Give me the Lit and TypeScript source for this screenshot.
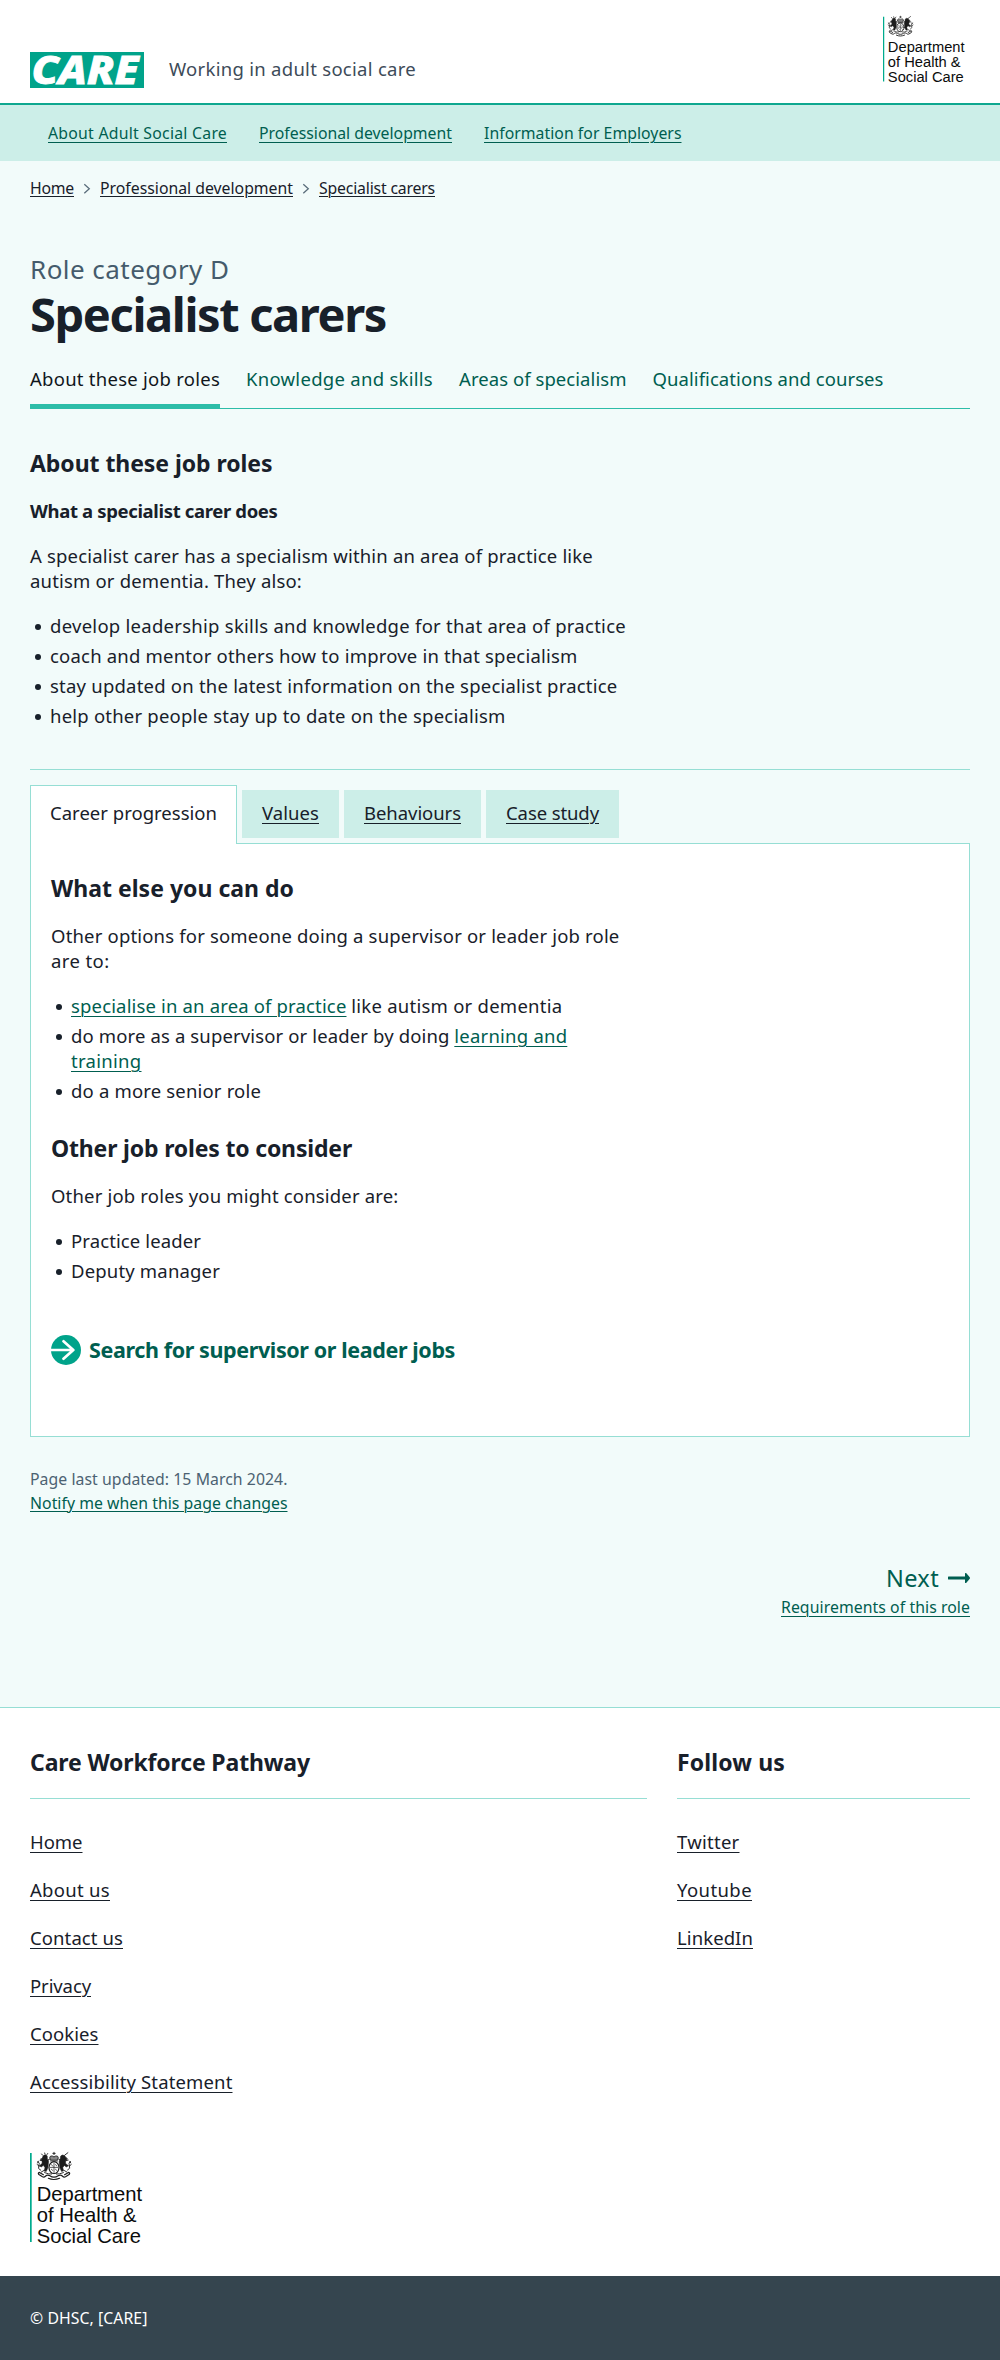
import { LitElement, html, css } from "lit";
import { customElement, property } from "lit/decorators.js";

type Entry = [label: string, width: number];

/* Text set to a fixed measure; tracking is resolved after render. */
const fit = (text: string, width: number) =>
  html`<span class="fit" data-w=${width}>${text}</span>`;
const link = ([text, width]: Entry) =>
  html`<a class="link"><span class="fit" data-w=${width}>${text}</span></a>`;

@customElement("dept-logo")
class DeptLogo extends LitElement {
  @property({ type: Number }) width = 112;

  static styles = css`
    :host { display: block; line-height: 0; }
    svg { display: block; overflow: visible; }
    .name { font: 20.2px "Liberation Sans", Arial, sans-serif; fill: #0b0c0c; }
  `;

  render() {
    return html`
      <svg width=${this.width} height=${(this.width * 92) / 112} viewBox="0 0 112 92">
        <rect x="0" y="1" width="1.7" height="89" fill="#00ab8e"></rect>
        <g stroke="#1c1c1c" fill="none" stroke-linecap="round" stroke-linejoin="round">
          <path d="M24 0.3v2.4M22.8 1.4h2.4" stroke-width="0.9"></path>
          <path d="M20.6 7.6q-2-3 .6-3.6q1.6-.2 2.8 1q1.2-1.2 2.8-1q2.6.6.6 3.6z" stroke-width="0.9" fill="#888"></path>
          <path d="M20.4 8.9h7.2" stroke-width="0.9"></path>
          <ellipse cx="24" cy="15.6" rx="5" ry="5.9" stroke-width="1.2" fill="#fff"></ellipse>
          <path d="M24 11v9.4M20.4 15.4h7.2M21.4 12.6l1.4 1.6M25.4 17.2l1.5 1.3M25.4 12.6l1.4 1.3M21.3 17.2l1.4 1.2" stroke-width="0.7"></path>
          <path d="M13.2 3.8q2.2-2 4 .1l.2 3q1.8 1.6 1 4.6l-.6 4.6l-1.6 3.4l-2.2-.6l1-3.2l-1.6-2.4l-2 1.6l-2.2-1l1.4-1.2l1.6-1.4l-.3-3.2l-1.7-.9l1.9-.9z" stroke-width="0.5" fill="#1c1c1c"></path>
          <path d="M12.6 3.2l-1-1.2M15 2.2l-.3-1.2M16.9 2.6l.8-1.1M18 8l1.7-.9M12.6 8.6l-2.4-.2M10.7 18.3q-3.5-1.5-1.9-4.6q1.5-2.7-.8-4.2M8.4 9.2l-.9 1.8M9 14q-1.3-.2-1.7-1.4M13.8 18.6l-2.6 1.5" stroke-width="0.9"></path>
          <path d="M34.6 3.6q-2.4-1.6-4 .6l-.5 3q-1.5 1.6-.8 4.4l.7 4.5l1.6 3.4l2.1-.7l-1-3.1l1.6-2.3l2 1.5l2.3-1.1l-1.5-1.1l-1.6-1.4l.3-3.1l1.5-1l-1.2-1.1z" stroke-width="0.5" fill="#1c1c1c"></path>
          <path d="M34.8 3.1l3.1-2.4M36 5.6l1.3 1M30.2 8l-1.7-.9M35.8 8.7l2.4-.6M37.6 18.1q3.4-1.6 1.8-4.6q-1.5-2.7.9-4.1M39.8 9.3l1 1.7M39.4 14q1.3-.2 1.7-1.4M34.4 18.6l2.6 1.5" stroke-width="0.9"></path>
          <path d="M9.5 20.4q-2 .5-.6 2.2l3.6 2.2q1.7.7 3.2-.8q1.8-1.6 4.2-.2q1.9 1.4 4.1 1.4t4.1-1.4q2.4-1.4 4.2.2q1.5 1.5 3.2.8l3.6-2.2q1.4-1.7-.6-2.2M9.5 20.4l3.9 2.3M38.5 20.4l-3.9 2.3M18.4 26.3q2.8 1.3 5.6 1.2t5.6-1.2" stroke-width="1.2"></path>
          <path d="M14.6 20.6l3.8 1.2l3.2.2M33.4 20.6l-3.8 1.2l-3.2.2" stroke-width="0.9"></path>
        </g>
        <text class="name" x="6.7" y="49.4">Department</text>
        <text class="name" x="6.7" y="70.3">of Health &amp;</text>
        <text class="name" x="6.7" y="91.2">Social Care</text>
      </svg>
    `;
  }
}

@customElement("app-root")
class AppRoot extends LitElement {
  static styles = css`
    :host {
      display: block;
      background: #f2fbfa;
      color: #18202a;
      font-family: "Noto Sans", "Open Sans", sans-serif;
      font-size: 18.5px;
      line-height: 25px;
    }
    * { box-sizing: border-box; }
    h1, h2, h3, p, ul { margin: 0; padding: 0; }
    ul { list-style: none; }
    .fit { white-space: nowrap; }
    .line { display: block; }
    .link {
      text-decoration: underline;
      text-decoration-thickness: 1px;
      text-underline-offset: 3px;
      color: inherit;
      cursor: pointer;
    }
    .green { color: #005e50; }
    .small { font-size: 15.8px; line-height: 24px; }
    .small .link { text-underline-offset: 2px; }

    header {
      display: flex;
      align-items: flex-start;
      height: 105px;
      padding: 0 30px;
      background: #fff;
      border-bottom: 2px solid #0ea78f;
    }
    .brand { display: block; margin-top: 52px; overflow: visible; }
    .brand-text {
      font: italic 800 39.5px "Noto Sans", "Open Sans", sans-serif;
      fill: #fff;
      stroke: #fff;
      stroke-width: 0.9px;
    }
    .tagline { margin: 56px auto 0 25px; color: #3d4b59; }
    .head-logo { margin: 16px 5.5px 0 0; }

    .nav {
      display: flex;
      gap: 32px;
      height: 56px;
      padding: 16px 48px 0;
      background: #cceee8;
      color: #005e50;
    }
    .nav .link { text-underline-offset: 3px; }
    main { padding: 0 30px 88px; }
    .crumbs { display: flex; padding-top: 15px; }
    .chevron { display: block; flex: none; width: 26px; height: 24px; }

    .caption {
      margin-top: 51px;
      font-size: 26px;
      line-height: 36px;
      color: #455b6c;
    }
    h1 { font-size: 47px; line-height: 54px; font-weight: 670; }
    h2 { font-size: 23px; line-height: 32px; font-weight: 660; }
    h3 { font-size: 18.5px; line-height: 25px; margin-top: 19px; font-weight: 660; }

    .sections {
      display: flex;
      gap: 26px;
      margin-top: 25px;
      box-shadow: inset 0 -1px #2dbda8;
      color: #005e50;
    }
    .section { height: 43px; }
    .section.current { border-bottom: 5px solid #2dbda8; color: #10161a; }
    .about { margin-top: 38px; }
    .text { margin-top: 20px; }
    h2 + .text { margin-top: 19px; }

    .bullets { display: grid; gap: 5px; margin-top: 20px; }
    .bullets li { display: flex; }
    .bullets li::before {
      content: "";
      flex: none;
      width: 6px;
      height: 6px;
      margin: 11px 9.5px 0 4.5px;
      border-radius: 50%;
      background: #18202a;
    }

    hr { height: 1px; margin: 41px 0 15px; border: 0; background: #96ded4; }

    .tabs { display: flex; gap: 5px; align-items: flex-start; }
    .tab { height: 48px; margin-top: 5px; padding: 10px 20px 0; background: #cceee8; }
    .tab.current {
      z-index: 1;
      height: 59px;
      margin: 0 0 -1px;
      padding: 14px 19px 0;
      border: 1px solid #96ded4;
      border-bottom: 0;
      background: #fff;
    }
    .panel {
      padding: 28px 20px 71px;
      border: 1px solid #96ded4;
      background: #fff;
    }
    .panel .second { margin-top: 29px; }
    .action {
      display: flex;
      gap: 8px;
      margin-top: 52px;
      font-size: 21.5px;
      line-height: 30px;
      font-weight: 660;
      color: #005e50;
    }
    .updated { margin-top: 30px; color: #4c6272; }
    .pager {
      display: flex;
      flex-direction: column;
      align-items: flex-end;
      gap: 1px;
      margin-top: 47px;
      color: #005e50;
    }
    .next {
      display: flex;
      align-items: center;
      gap: 9px;
      font-size: 23.5px;
      line-height: 32px;
    }
    .pager .link { text-underline-offset: 3px; }

    footer { border-top: 1px solid #96ded4; background: #fff; padding: 38px 30px 32px; }
    .columns { display: grid; grid-template-columns: 617px 293px; gap: 30px; }
    .columns h2 { padding-bottom: 20px; border-bottom: 1px solid #96ded4; box-sizing: content-box; }
    .links { display: grid; gap: 23px; margin-top: 30px; }
    .foot-logo { margin-top: 58px; }
    .legal { height: 84px; padding: 30px 30px 0; background: #35454f; color: #fff; }
  `;

  firstUpdated() {
    this.renderRoot.querySelectorAll<HTMLElement>(".fit").forEach((el) => {
      const target = Number(el.dataset.w);
      const count = (el.textContent ?? "").length;
      let spacing = 0;
      for (let pass = 0; pass < 2; pass++) {
        spacing += (target - el.getBoundingClientRect().width) / count;
        el.style.letterSpacing = `${spacing.toFixed(4)}px`;
      }
    });
  }

  private chevron() {
    return html`<svg class="chevron" viewBox="0 0 26 24">
      <path d="M10.3 8.3l5 4.5l-5 4.5" fill="none" stroke="#5a6d7b" stroke-width="1.3"></path>
    </svg>`;
  }

  private footerLinks(entries: Entry[]) {
    return html`<ul class="links">${entries.map((e) => html`<li>${link(e)}</li>`)}</ul>`;
  }

  render() {
    return html`
      <header>
        <svg class="brand" width="114" height="36" viewBox="0 0 114 36">
          <rect width="114" height="36" fill="#00a38a"></rect>
          <text class="brand-text" x="1.5" y="32" textLength="107" lengthAdjust="spacingAndGlyphs">CARE</text>
        </svg>
        <div class="tagline">${fit("Working in adult social care", 247)}</div>
        <dept-logo class="head-logo" width="81.5"></dept-logo>
      </header>

      <nav class="nav small">
        ${link(["About Adult Social Care", 179])}
        ${link(["Professional development", 193])}
        ${link(["Information for Employers", 197.5])}
      </nav>

      <main>
        <nav class="crumbs small">
          ${link(["Home", 44])}${this.chevron()}
          ${link(["Professional development", 193])}${this.chevron()}
          ${link(["Specialist carers", 116])}
        </nav>

        <p class="caption">${fit("Role category D", 199.5)}</p>
        <h1>${fit("Specialist carers", 356)}</h1>

        <nav class="sections">
          <div class="section current">${fit("About these job roles", 190)}</div>
          <div class="section">${fit("Knowledge and skills", 187)}</div>
          <div class="section">${fit("Areas of specialism", 167.5)}</div>
          <div class="section">${fit("Qualifications and courses", 231)}</div>
        </nav>

        <section>
          <h2 class="about">${fit("About these job roles", 242.5)}</h2>
          <h3>${fit("What a specialist carer does", 247.5)}</h3>
          <p class="text">
            <span class="line">${fit("A specialist carer has a specialism within an area of practice like", 563)}</span>
            <span class="line">${fit("autism or dementia. They also:", 272)}</span>
          </p>
          <ul class="bullets">
            <li>${fit("develop leadership skills and knowledge for that area of practice", 576)}</li>
            <li>${fit("coach and mentor others how to improve in that specialism", 527.5)}</li>
            <li>${fit("stay updated on the latest information on the specialist practice", 567.5)}</li>
            <li>${fit("help other people stay up to date on the specialism", 455.5)}</li>
          </ul>
        </section>

        <hr />

        <div class="tabs">
          <div class="tab current">${fit("Career progression", 167)}</div>
          <div class="tab">${link(["Values", 57])}</div>
          <div class="tab">${link(["Behaviours", 97])}</div>
          <div class="tab">${link(["Case study", 93])}</div>
        </div>
        <section class="panel">
          <h2>${fit("What else you can do", 243)}</h2>
          <p class="text">
            <span class="line">${fit("Other options for someone doing a supervisor or leader job role", 568.5)}</span>
            <span class="line">${fit("are to:", 58.5)}</span>
          </p>
          <ul class="bullets">
            <li><div><span class="green">${link(["specialise in an area of practice", 275.5])}</span> ${fit("like autism or dementia", 211)}</div></li>
            <li>
              <div>
                <span class="line">${fit("do more as a supervisor or leader by doing", 378.5)} <span class="green">${link(["learning and", 113])}</span></span>
                <span class="line green">${link(["training", 70.5])}</span>
              </div>
            </li>
            <li>${fit("do a more senior role", 190)}</li>
          </ul>
          <h2 class="second">${fit("Other job roles to consider", 301)}</h2>
          <p class="text">${fit("Other job roles you might consider are:", 347.5)}</p>
          <ul class="bullets">
            <li>${fit("Practice leader", 130)}</li>
            <li>${fit("Deputy manager", 149)}</li>
          </ul>
          <div class="action">
            <svg width="30" height="30" viewBox="0 0 30 30">
              <circle cx="15" cy="15" r="15" fill="#00a38a"></circle>
              <path d="M0 15h22M12.5 6.3l9.8 8.7l-9.8 8.7" fill="none" stroke="#fff" stroke-width="2.7" stroke-linecap="round" stroke-linejoin="round"></path>
            </svg>
            ${fit("Search for supervisor or leader jobs", 366)}
          </div>
        </section>

        <div class="updated small">
          <div>${fit("Page last updated: 15 March 2024.", 257.5)}</div>
          <div class="green">${link(["Notify me when this page changes", 257.5])}</div>
        </div>

        <div class="pager">
          <div class="next">
            ${fit("Next", 53)}
            <svg width="22" height="12" viewBox="0 0 22 12">
              <path d="M0.8 6h17" stroke="#005e50" stroke-width="2.8" stroke-linecap="round"></path>
              <path d="M17 1.3q.6-.7 1.4 0l3.3 3.9q.6.8 0 1.6l-3.3 3.9q-.8.7-1.4 0z" fill="#005e50"></path>
            </svg>
          </div>
          <div class="small">${link(["Requirements of this role", 189])}</div>
        </div>
      </main>

      <footer>
        <div class="columns">
          <div>
            <h2>${fit("Care Workforce Pathway", 280)}</h2>
            ${this.footerLinks([
              ["Home", 52.5],
              ["About us", 80],
              ["Contact us", 93],
              ["Privacy", 61],
              ["Cookies", 68.5],
              ["Accessibility Statement", 202.5],
            ])}
          </div>
          <div>
            <h2>${fit("Follow us", 108)}</h2>
            ${this.footerLinks([
              ["Twitter", 62.5],
              ["Youtube", 75],
              ["LinkedIn", 76],
            ])}
          </div>
        </div>
        <dept-logo class="foot-logo" width="112"></dept-logo>
      </footer>
      <div class="legal small">${fit("© DHSC, [CARE]", 117.5)}</div>
    `;
  }
}
